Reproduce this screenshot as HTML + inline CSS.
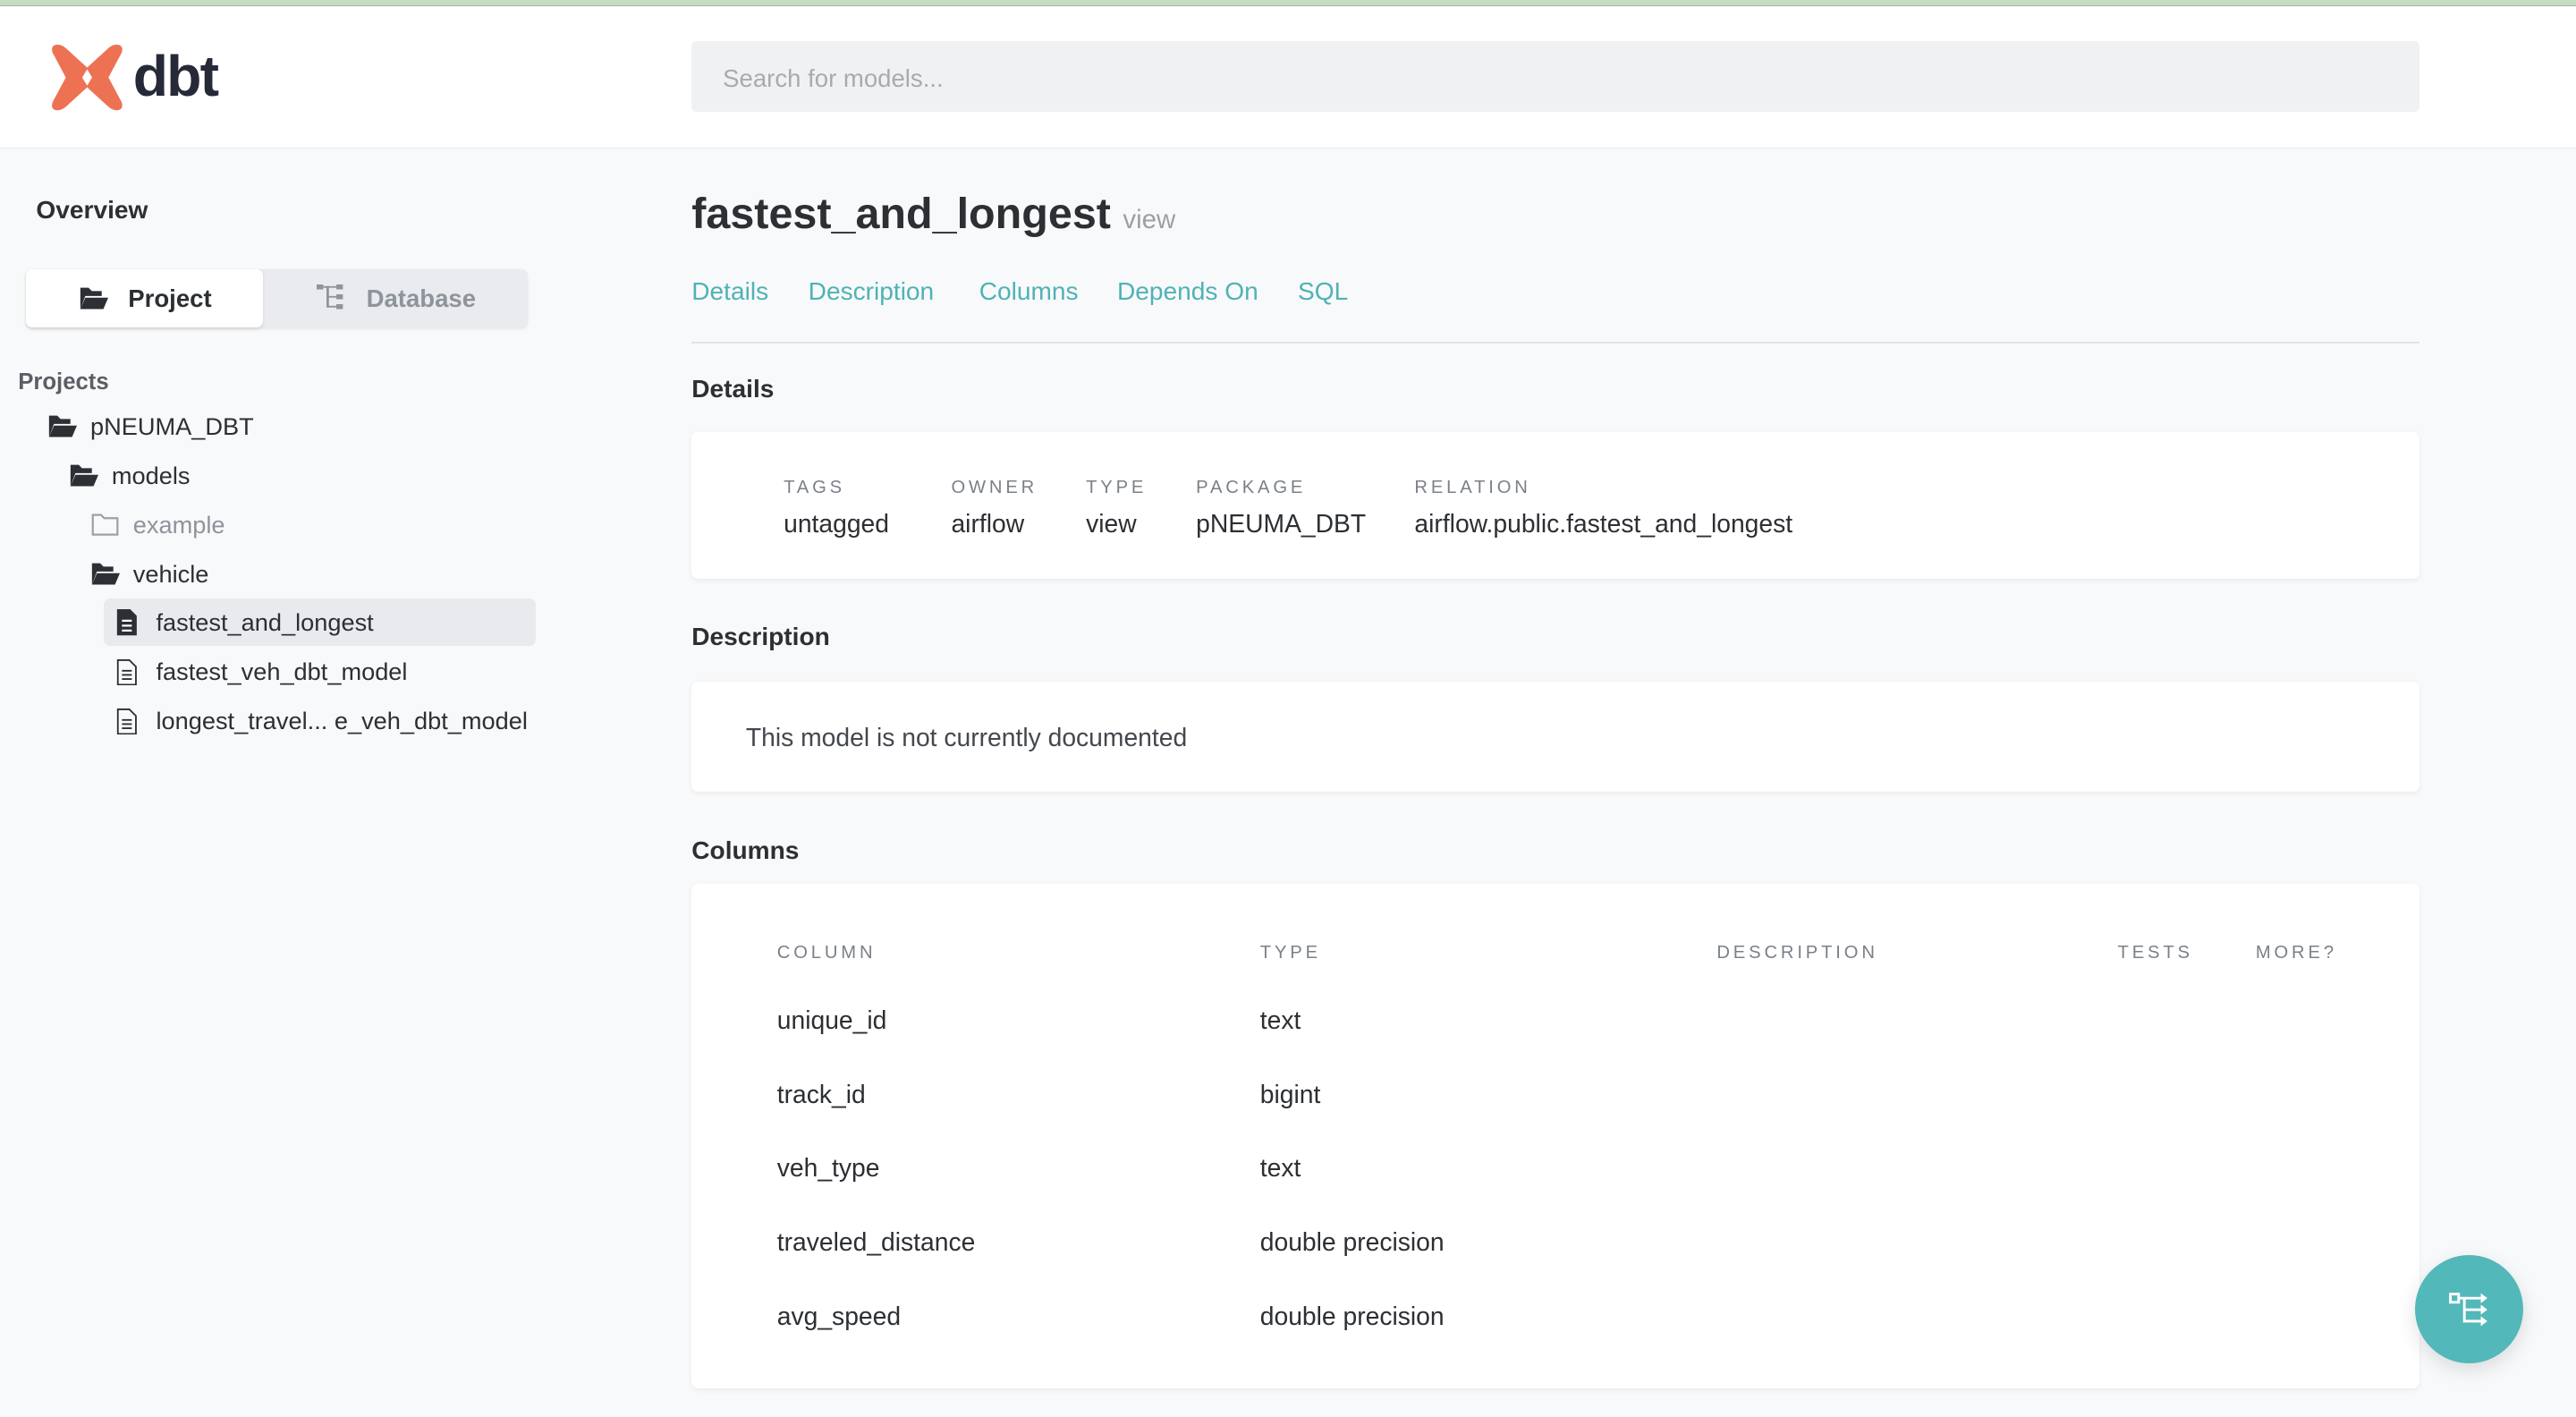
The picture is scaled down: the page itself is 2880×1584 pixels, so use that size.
<!DOCTYPE html>
<html><head><meta charset="utf-8"><style>
html,body{margin:0;padding:0;background:#f8f9fa;overflow:hidden;width:2880px;height:1584px}
#w{zoom:1.83673;width:1568px;height:863px;position:relative;font-family:"Liberation Sans",sans-serif;color:#2c2f33}
.a{position:absolute;white-space:nowrap}
.hdr{position:absolute;left:0;top:0;width:1568px;height:90px;background:#fff;border-bottom:1px solid #e8eaed}
.top{position:absolute;left:0;top:0;width:1568px;height:3px;background:#c5dcc4;border-bottom:1px solid #9fb89e}
.search{position:absolute;left:421px;top:25px;width:1052px;height:43px;background:#f0f1f3;border-radius:3px}
.card{position:absolute;left:421px;width:1052px;background:#fff;border-radius:4px;box-shadow:0 1px 3px rgba(0,0,0,.06)}
.lbl{font-size:11px;letter-spacing:2.1px;color:#7b8088}
.val{font-size:15.4px;color:#2c2f33}
.tab{font-size:15.3px;color:#4fb2b6}
.h{font-size:15.3px;font-weight:bold}
.t{font-size:14.8px;color:#2c2f33}
.s{margin-top:1px}
</style></head><body><div id="w">
<div class="hdr"></div><div class="top"></div>
<svg class="a" style="left:31px;top:26px" width="44" height="42" viewBox="0 0 44 42"><path d="M4 1 C1 1 0 3 1 6 L9 21 L1 36 C0 39 1 41 4 41 C6 41 8 40 10 38 L22 27 L34 38 C36 40 38 41 40 41 C43 41 44 39 43 36 L35 21 L43 6 C44 3 43 1 40 1 C38 1 36 2 34 4 L22 15 L10 4 C8 2 6 1 4 1Z" fill="#ed7254"/><path d="M22 16 L25 21 L22 26 L19 21Z" fill="#fff"/></svg>
<div class="a" style="left:81px;top:26px;font-size:35px;font-weight:bold;color:#262a38;letter-spacing:-1px">dbt</div>
<div class="search"></div>
<div class="a" style="left:440px;top:39px;font-size:15px;color:#a7abb1">Search for models...</div>

<div class="a h" style="left:22px;top:119px">Overview</div>
<div class="a" style="left:16px;top:164px;width:305px;height:35px;background:#e9ebee;border-radius:4px;box-shadow:0 1px 2px rgba(0,0,0,.08)"></div>
<div class="a" style="left:16px;top:164px;width:144px;height:35px;background:#fff;border-radius:4px;box-shadow:0 1px 2px rgba(0,0,0,.1)"></div>
<svg class="a" style="left:48px;top:173px" width="18" height="16" viewBox="0 0 18 16"><path d="M1 2h5l2 2h6v3H4L1 15z" fill="#2c2f33"/><path d="M4 8h14l-3 7H1z" fill="#2c2f33"/></svg>
<div class="a" style="left:78px;top:173px;font-size:15px;font-weight:bold">Project</div>
<svg class="a" style="left:193px;top:173px" width="16" height="16" viewBox="0 0 16 16" fill="#8e949c"><rect x="0" y="0" width="4" height="3"/><rect x="12" y="0" width="4" height="3"/><rect x="12" y="6" width="4" height="3"/><rect x="12" y="12" width="4" height="3"/><rect x="4" y="1" width="8" height="1"/><rect x="6" y="1" width="1.5" height="13"/><rect x="6" y="7" width="6" height="1"/><rect x="6" y="13" width="6" height="1"/></svg>
<div class="a" style="left:223px;top:173px;font-size:15px;font-weight:bold;color:#8e949c">Database</div>

<div class="a" style="left:11px;top:225px;font-size:14px;font-weight:bold;color:#5a5f66">Projects</div>
<div class="a" style="left:63px;top:364px;width:263px;height:29px;background:#e9eaed;border-radius:4px"></div>
<svg width="0" height="0" style="position:absolute"><defs>
<symbol id="fo" viewBox="0 0 18 16"><path d="M1 2h5l2 2h6v3H4L1 15z" fill="#2c2f33"/><path d="M4 8h14l-3 7H1z" fill="#2c2f33"/></symbol>
<symbol id="fc" viewBox="0 0 18 16"><path d="M1.5 2.5h5l2 2h8v10h-15z" fill="none" stroke="#9ca1a8" stroke-width="1.2"/></symbol>
<symbol id="ff" viewBox="0 0 14 16"><path d="M1 0h8l4 4v12H1z" fill="#2c2f33"/><path d="M4 7h6M4 10h6M4 13h6" stroke="#fff" stroke-width="1.2"/></symbol>
<symbol id="fl" viewBox="0 0 14 16"><path d="M1.5 .5h7l4 4v11h-11z" fill="none" stroke="#2c2f33" stroke-width="1"/><path d="M4 7h6M4 9.5h6M4 12h6" stroke="#2c2f33" stroke-width="1"/></symbol>
</defs></svg>
<svg class="a" style="left:29px;top:251px" width="18" height="16"><use href="#fo"/></svg>
<div class="a t" style="left:55px;top:251px">pNEUMA_DBT</div>
<svg class="a" style="left:42px;top:281px" width="18" height="16"><use href="#fo"/></svg>
<div class="a t" style="left:68px;top:281px">models</div>
<svg class="a" style="left:55px;top:311px" width="18" height="16"><use href="#fc"/></svg>
<div class="a t" style="left:81px;top:311px;color:#8e949c">example</div>
<svg class="a" style="left:55px;top:341px" width="18" height="16"><use href="#fo"/></svg>
<div class="a t" style="left:81px;top:341px">vehicle</div>
<svg class="a" style="left:70px;top:371px" width="14" height="16"><use href="#ff"/></svg>
<div class="a t" style="left:95px;top:370px">fastest_and_longest</div>
<svg class="a" style="left:70px;top:401px" width="14" height="16"><use href="#fl"/></svg>
<div class="a t" style="left:95px;top:400px">fastest_veh_dbt_model</div>
<svg class="a" style="left:70px;top:431px" width="14" height="16"><use href="#fl"/></svg>
<div class="a t" style="left:95px;top:430px">longest_travel... e_veh_dbt_model</div>

<div class="a" style="left:421px;top:115px;font-size:26.4px;font-weight:bold">fastest_and_longest <span style="font-size:16px;font-weight:normal;color:#9aa0a6">view</span></div>
<div class="a tab" style="left:421px;top:169px">Details</div>
<div class="a tab" style="left:492px;top:169px">Description</div>
<div class="a tab" style="left:596px;top:169px">Columns</div>
<div class="a tab" style="left:680px;top:169px">Depends On</div>
<div class="a tab" style="left:790px;top:169px">SQL</div>
<div class="a" style="left:421px;top:208px;width:1052px;height:1px;background:#e2e4e7"></div>

<div class="a h" style="left:421px;top:228px">Details</div>
<div class="card" style="top:263px;height:89px"></div>
<div class="a lbl" style="left:477px;top:291px">TAGS</div><div class="a val" style="left:477px;top:310px">untagged</div>
<div class="a lbl" style="left:579px;top:291px">OWNER</div><div class="a val" style="left:579px;top:310px">airflow</div>
<div class="a lbl" style="left:661px;top:291px">TYPE</div><div class="a val" style="left:661px;top:310px">view</div>
<div class="a lbl" style="left:728px;top:291px">PACKAGE</div><div class="a val" style="left:728px;top:310px">pNEUMA_DBT</div>
<div class="a lbl" style="left:861px;top:291px">RELATION</div><div class="a val" style="left:861px;top:310px">airflow.public.fastest_and_longest</div>

<div class="a h" style="left:421px;top:379px">Description</div>
<div class="card" style="top:415px;height:67px"></div>
<div class="a val" style="left:454px;top:440px;color:#44484e">This model is not currently documented</div>

<div class="a h" style="left:421px;top:509px">Columns</div>
<div class="card" style="top:538px;height:307px"></div>
<div class="a lbl" style="left:473px;top:574px">COLUMN</div>
<div class="a lbl" style="left:767px;top:574px">TYPE</div>
<div class="a lbl" style="left:1045px;top:574px">DESCRIPTION</div>
<div class="a lbl" style="left:1289px;top:574px">TESTS</div>
<div class="a lbl" style="left:1373px;top:574px">MORE?</div>
<div class="a val" style="left:473px;top:612px">unique_id</div><div class="a val" style="left:767px;top:612px">text</div>
<div class="a val" style="left:473px;top:657px">track_id</div><div class="a val" style="left:767px;top:657px">bigint</div>
<div class="a val" style="left:473px;top:702px">veh_type</div><div class="a val" style="left:767px;top:702px">text</div>
<div class="a val" style="left:473px;top:747px">traveled_distance</div><div class="a val" style="left:767px;top:747px">double precision</div>
<div class="a val" style="left:473px;top:792px">avg_speed</div><div class="a val" style="left:767px;top:792px">double precision</div>

<div class="a" style="left:1470px;top:764px;width:66px;height:66px;border-radius:50%;background:#53b8ba;box-shadow:0 4px 12px rgba(0,0,0,.12)"></div>
<svg class="a" style="left:1489px;top:785px" width="28" height="24" viewBox="0 0 28 24" fill="none" stroke="#fff" stroke-width="1.6"><rect x="2.5" y="2.5" width="5" height="5"/><path d="M7.5 5H22M11 5V19H22M11 12H22"/><path d="M21 2l4 3-4 3zM21 9l4 3-4 3zM21 16l4 3-4 3z" fill="#fff" stroke="none"/></svg>
</div></body></html>
